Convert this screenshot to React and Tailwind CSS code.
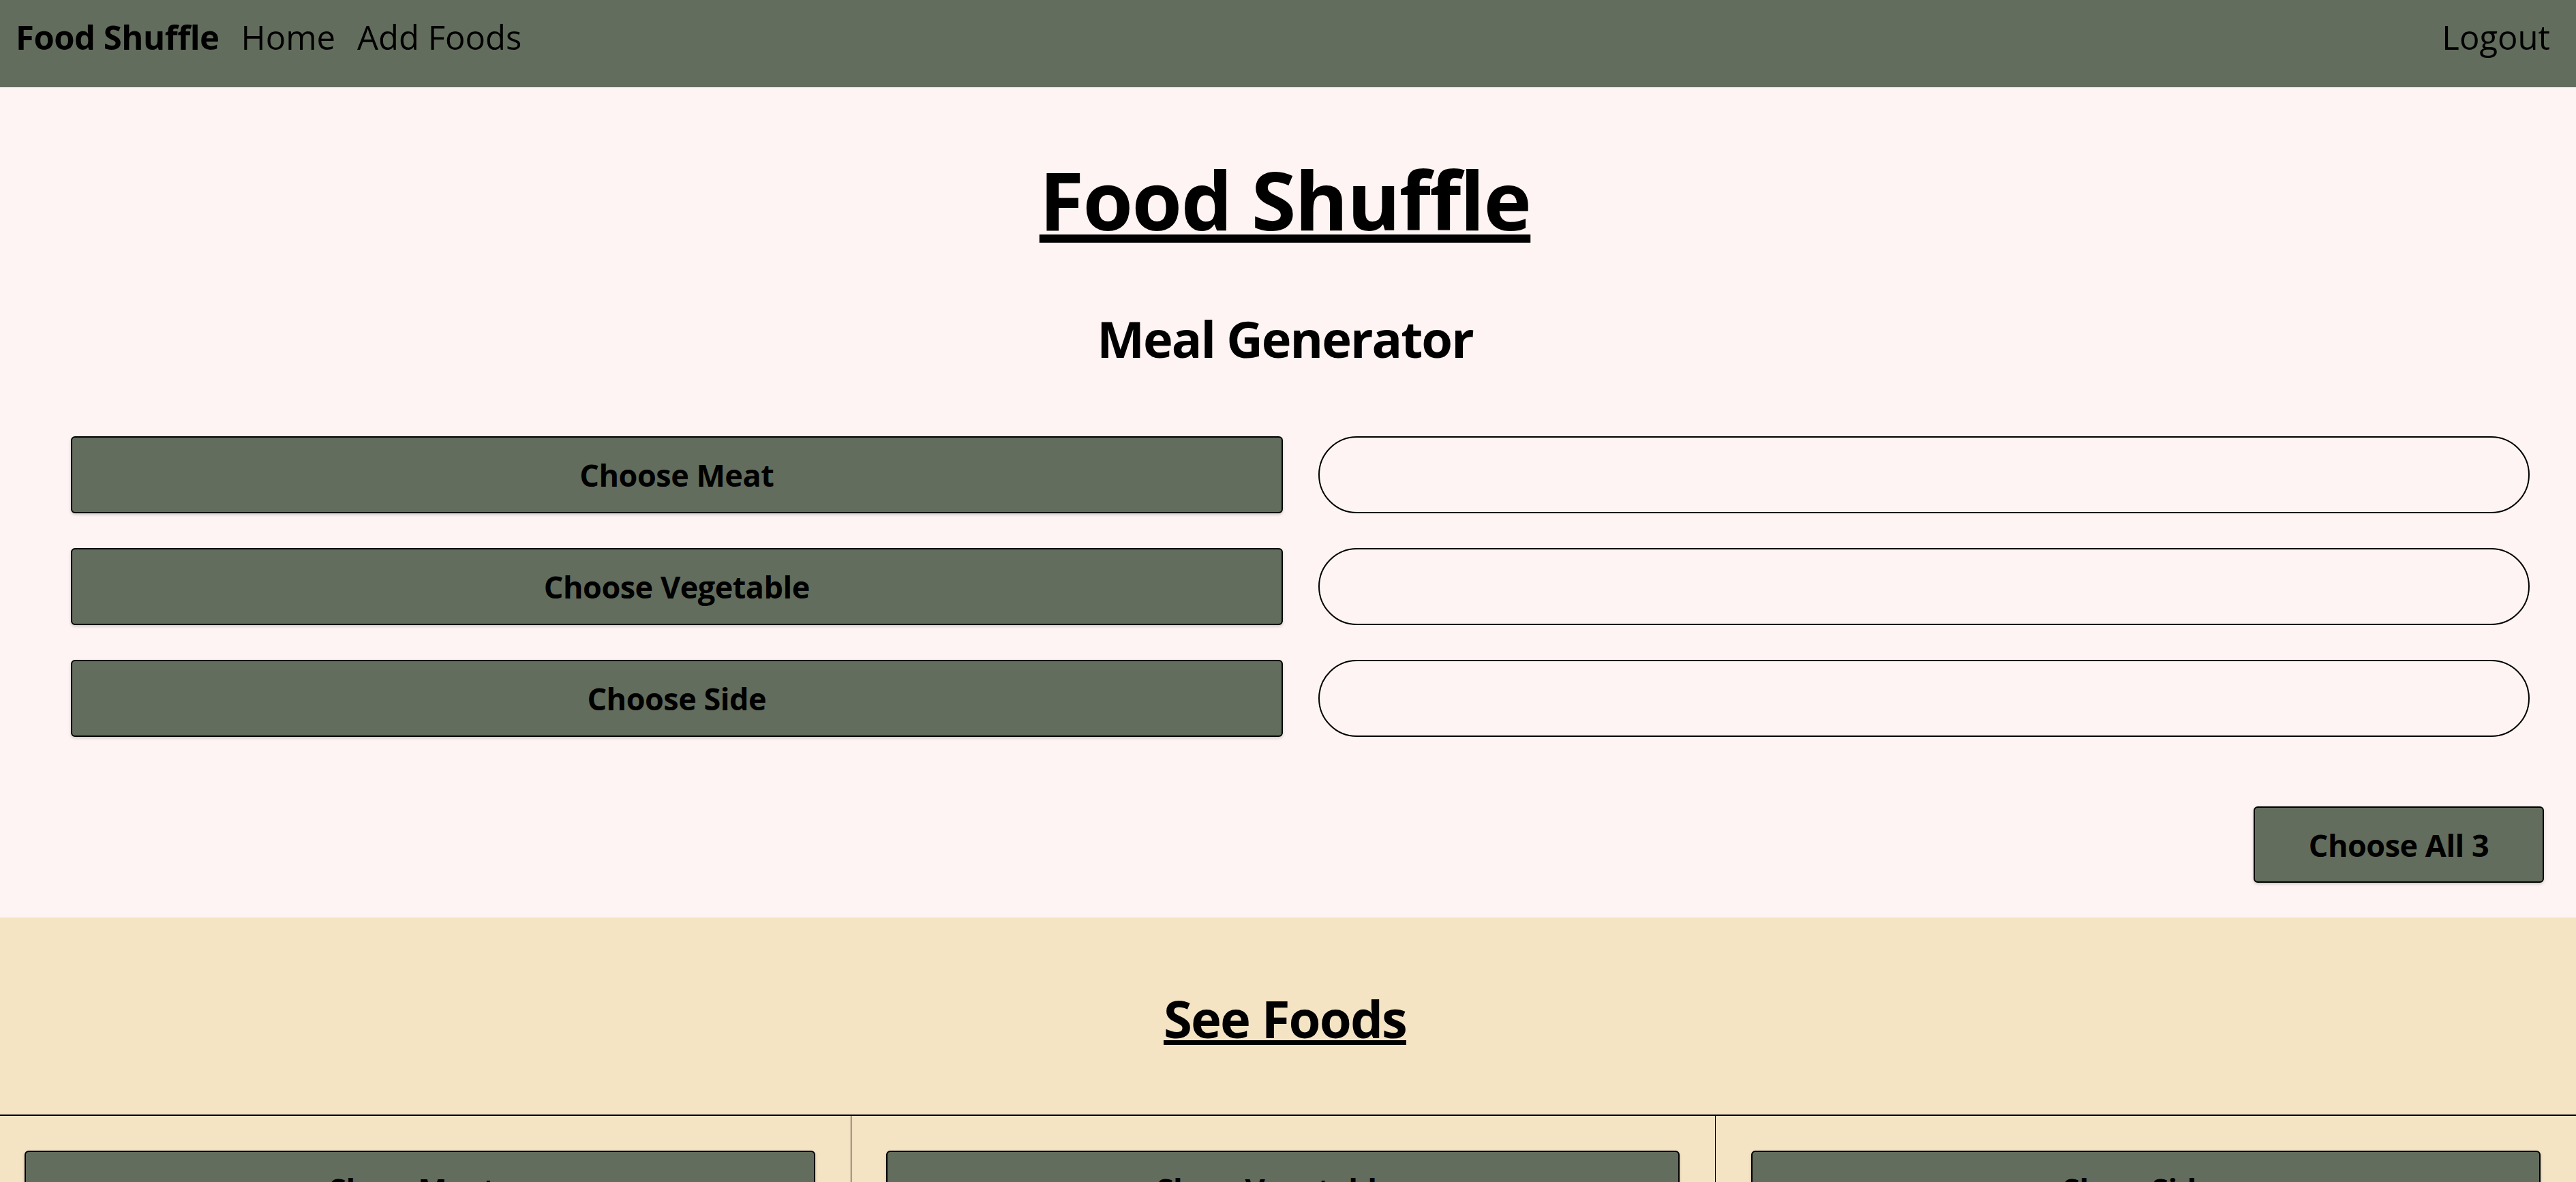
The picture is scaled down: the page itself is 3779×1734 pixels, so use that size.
export default function App() {
  const btn =
    "bg-[#636d5d] border-2 border-black rounded-[6px] shadow-[0_2px_4px_rgba(0,0,0,0.18)] font-bold text-[45px] leading-none tracking-[-0.5px] flex items-center justify-center text-black";
  const rows = ["Choose Meat", "Choose Vegetable", "Choose Side"];
  return (
    <div className="w-full min-h-screen font-['Open_Sans','Noto_Sans',sans-serif] text-black">
      <nav className="h-[128px] bg-[#636d5d] flex items-start justify-between pl-[23px] pr-[38px] pt-[21px]">
        <div className="flex items-start gap-[32px] text-[49px] leading-[67px]">
          <span className="font-bold tracking-[-0.5px]">Food Shuffle</span>
          <a>Home</a>
          <a>Add Foods</a>
        </div>
        <a className="text-[49px] leading-[67px]">Logout</a>
      </nav>

      <section className="bg-[#fdf4f3] pt-[83px] pb-[51px]">
        <h1 className="pr-[9px] text-center text-[119px] leading-[162px] font-bold tracking-[-1.6px] underline decoration-[12px] underline-offset-[6px]">
          Food Shuffle
        </h1>
        <h2 className="pr-[9px] mt-[73px] text-center text-[74px] leading-[101px] font-bold tracking-[-2px]">
          Meal Generator
        </h2>
        <div className="mt-[93px] pl-[104px] pr-[68px] flex flex-col gap-[51px]">
          {rows.map((r) => (
            <div key={r} className="grid grid-cols-2 gap-x-[52px]">
              <button className={`${btn} h-[113px] w-full`}>{r}</button>
              <div className="h-[113px] rounded-full border-2 border-black bg-[#fdf4f3]" />
            </div>
          ))}
        </div>
        <div className="mt-[102px] flex justify-end pr-[47px]">
          <button className={`${btn} w-[426px] h-[112px]`}>Choose All 3</button>
        </div>
      </section>

      <section className="bg-[#f5e4c4] pt-[95px]">
        <h2 className="pr-[9px] text-center text-[76px] leading-[105px] font-bold tracking-[-1.9px] underline decoration-[7px] underline-offset-[3px]">
          See Foods
        </h2>
        <div className="mt-[89px] border-t-2 border-black flex">
          <div className="w-[1249px] border-r border-black pt-[51px] pb-[60px] pl-[36px] flex">
            <button className={`${btn} w-[1160px] h-[113px]`}>Show Meats</button>
          </div>
          <div className="w-[1268px] border-r border-black pt-[51px] pb-[60px] pl-[51px] flex">
            <button className={`${btn} w-[1164px] h-[113px]`}>Show Vegetables</button>
          </div>
          <div className="flex-1 pt-[51px] pb-[60px] pl-[52px] flex">
            <button className={`${btn} w-[1158px] h-[113px]`}>Show Sides</button>
          </div>
        </div>
      </section>
    </div>
  );
}
